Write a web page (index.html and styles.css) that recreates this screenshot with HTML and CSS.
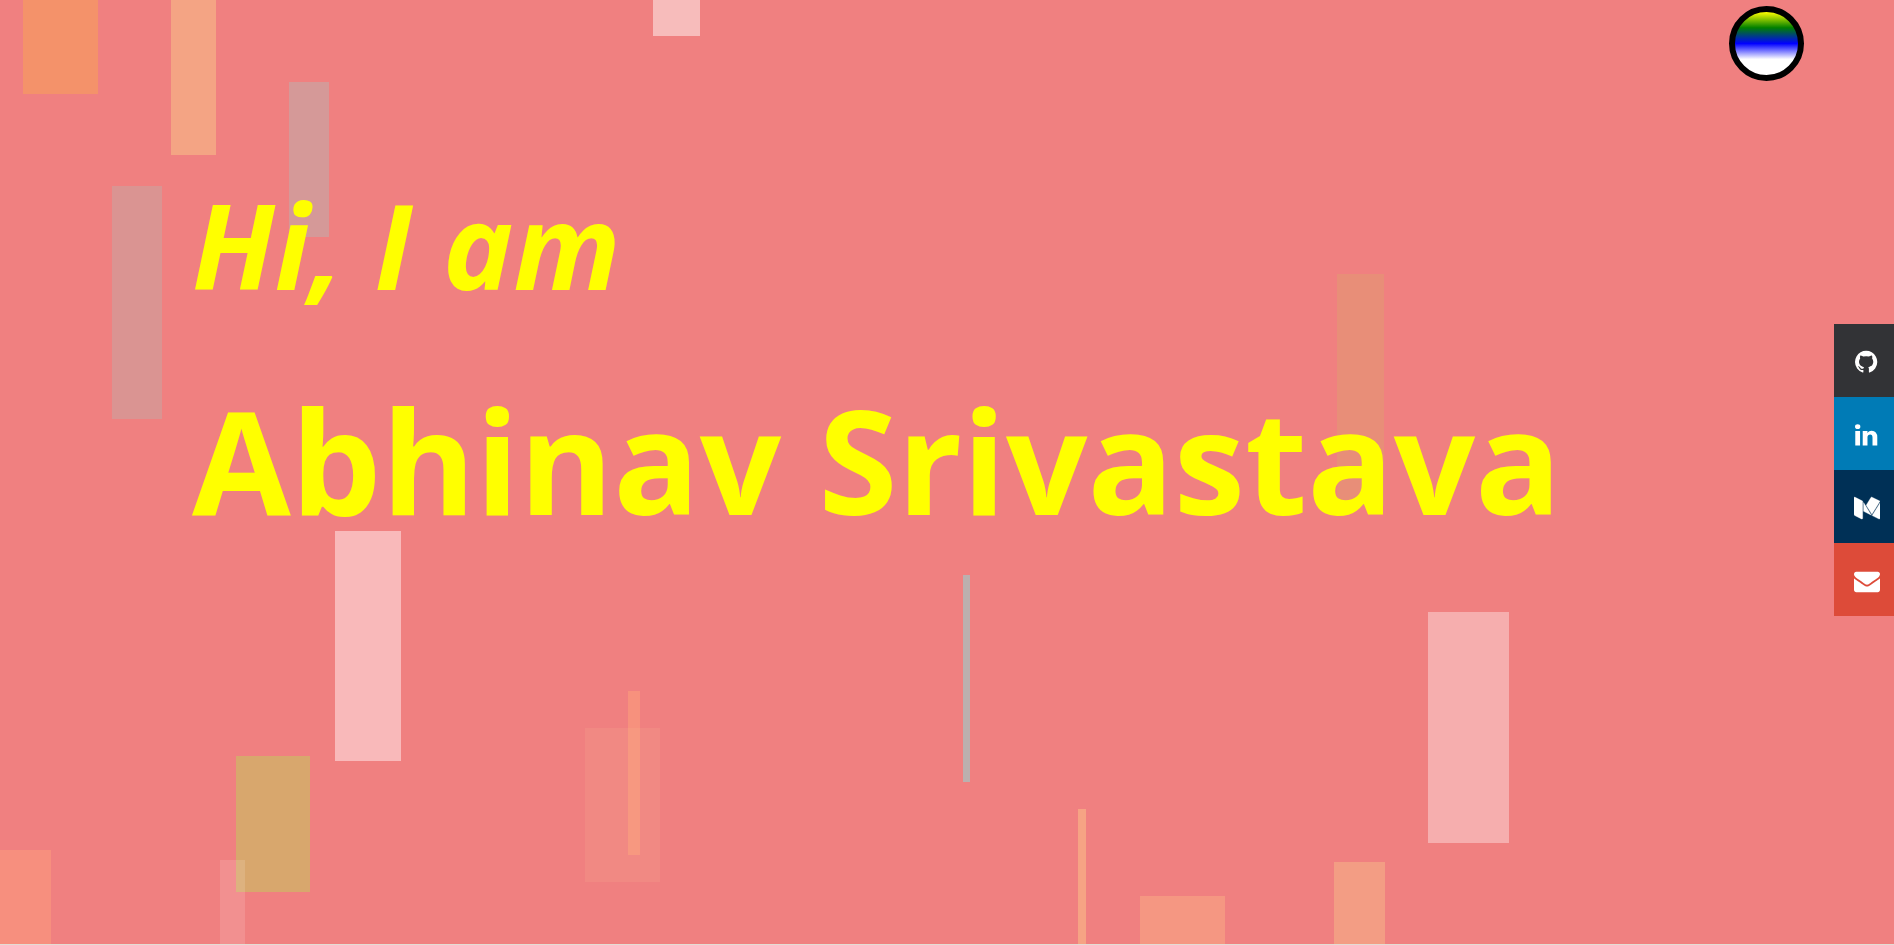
FILE: index.html
```html
<!DOCTYPE html>
<html lang="en">
<head>
<meta charset="utf-8">
<meta name="viewport" content="width=device-width, initial-scale=1">
<title>Abhinav Srivastava</title>
<link rel="stylesheet" href="styles.css">
</head>
<body>
<main class="hero">
  <svg class="backdrop" viewBox="0 0 1894 944" preserveAspectRatio="none" aria-hidden="true">
    <rect x="23" y="0" width="75" height="94" fill="#f4926a"/>
    <rect x="171" y="0" width="45" height="155" fill="#f4a484"/>
    <rect x="653" y="0" width="47" height="36" fill="#f7bcbb"/>
    <rect x="289" y="82" width="40" height="155" fill="#d59998"/>
    <rect x="112" y="186" width="50" height="233" fill="#da9492"/>
    <rect x="1337" y="274" width="47" height="232" fill="#e88e78"/>
    <rect x="335" y="531" width="66" height="230" fill="#f9b9ba"/>
    <rect x="236" y="756" width="74" height="136" fill="#d8a76d"/>
    <rect x="0" y="850" width="51" height="94" fill="#f78f7e"/>
    <rect x="220" y="860" width="25" height="84" fill="#ffffff" fill-opacity=".13"/>
    <rect x="628" y="691" width="12" height="164" fill="#f7917d"/>
    <rect x="585" y="728" width="75" height="154" fill="#ffd8a0" fill-opacity=".1"/>
    <rect x="963" y="575" width="7" height="207" fill="#bbb0af"/>
    <rect x="1078" y="809" width="8" height="135" fill="#f6a384"/>
    <rect x="1140" y="896" width="85" height="48" fill="#f59782"/>
    <rect x="1334" y="862" width="51" height="82" fill="#f39d84"/>
    <rect x="1428" y="612" width="81" height="231" fill="#f6aeae"/>
  </svg>
  <h2 class="greeting">Hi, I am</h2>
  <h1 class="name">Abhinav Srivastava</h1>
  <button class="theme" type="button" aria-label="Change theme"></button>
  <nav class="social" aria-label="Social links">
    <a class="social-link github" href="#" aria-label="GitHub">
      <svg class="icon" viewBox="0 0 1536 1792"><path fill="currentColor" d="M768 128q209 0 385.500 103t279.500 279.500 103 385.500q0 251-146.500 451.500t-378.500 277.500q-27 5-40-7t-13-30q0-3 .5-76.500t.5-134.500q0-97-52-142 57-6 102.500-18t94-39 81-66.500 53-105 20.500-150.500q0-119-79-206 37-91-8-204-28-9-81 11t-92 44l-38 24q-93-26-192-26t-192 26q-16-11-42.500-27t-83.500-38.500-85-13.500q-45 113-8 204-79 87-79 206 0 85 20.500 150t52.500 105 80.500 67 94 39 102.500 18q-39 36-49 103-21 10-45 15t-57 5-65.500-21.500-55.500-62.500q-19-32-48.500-52t-49.500-24l-20-3q-21 0-29 4.500t-5 11.500 9 14 13 12l7 5q22 10 43.500 38t31.500 51l10 23q13 38 44 61.500t67 30 69.500 7 55.500-3.500l23-4q0 38 .5 88.500t.5 54.500q0 18-13 30t-40 7q-232-77-378.500-277.500t-146.500-451.500q0-209 103-385.500t279.500-279.500 385.500-103z"/></svg>
    </a>
    <a class="social-link linkedin" href="#" aria-label="LinkedIn">
      <svg class="icon" viewBox="0 0 1536 1792"><path fill="currentColor" d="M349 625v991h-330v-991h330zM370 319q1 73-50.500 122t-135.500 49h-2q-82 0-132-49t-50-122q0-74 51.500-122.500t134.500-48.500 133 48.500 51 122.500zM1536 1048v568h-329v-530q0-105-40.500-164.500t-126.500-59.500q-63 0-105.500 34.500t-63.500 85.500q-11 30-11 81v553h-329q2-399 2-647t-1-296l-1-48h329v144h-2q20-32 41-56t56.500-52 87-43.500 114.500-15.500q171 0 275 113.500t104 332.500z"/></svg>
    </a>
    <a class="social-link medium" href="#" aria-label="Medium">
      <svg class="icon" viewBox="0 0 1792 1792"><path fill="currentColor" stroke="currentColor" stroke-width="24" d="M597 421v1173q0 25-12.500 42.500t-36.500 17.500q-17 0-33-8l-465-233q-21-10-35.500-33.500t-14.500-46.500v-1140q0-20 10-34t29-14q14 0 44 15l511 256q3 3 3 5zM661 522l534 866-534-266v-600zM1792 548v1046q0 25-14 41t-38 16-47-13l-441-220zM1789 428q0 3-256.500 419.500t-300.500 487.500l-390-634 324-527q17-28 52-28 14 0 26 6l541 270q4 2 4 6z"/></svg>
    </a>
    <a class="social-link mail" href="#" aria-label="Email">
      <svg class="icon" viewBox="0 0 1792 1792"><path fill="currentColor" d="M1792 710v794q0 66-47 113t-113 47h-1472q-66 0-113-47t-47-113v-794q44 49 101 87 362 246 497 345 57 42 92.500 65.500t94.500 48 110 24.500h2q51 0 110-24.500t94.500-48 92.500-65.500q170-123 498-345 57-39 100-87zM1792 416q0 79-49 151t-122 123q-376 261-468 325-10 7-42.500 30.500t-54 38-52 32.500-57.500 27-50 9h-2q-23 0-50-9t-57.500-27-52-32.500-54-38-42.500-30.500q-91-64-262-182.500t-205-142.500q-62-42-117-115.500t-55-136.500q0-78 41.500-130t118.500-52h1472q65 0 112.500 47t47.500 113z"/></svg>
    </a>
  </nav>
</main>
</body>
</html>
```
FILE: styles.css
```css
* {
  box-sizing: border-box;
}

body {
  margin: 0;
  background: #e4dcd4;
  font-family: "Segoe UI", "Open Sans", "Noto Sans", sans-serif;
}

.hero {
  position: relative;
  min-height: calc(100vh - 1px);
  padding: 168px 60px 0 192px;
  overflow: hidden;
  background: #f08080;
  color: #ffff00;
}

.backdrop {
  position: absolute;
  inset: 0;
  width: 100%;
  height: 100%;
}

.greeting,
.name {
  position: relative;
  margin: 0;
  font-weight: 700;
  white-space: nowrap;
}

.greeting {
  font-size: 6.25vw;
  font-style: italic;
  line-height: 152px;
}

.name {
  margin-top: 36px;
  font-size: 7.56vw;
  line-height: 208px;
}

.theme {
  position: absolute;
  top: 6px;
  right: 90px;
  width: 75px;
  height: 75px;
  padding: 0;
  border: 6px solid #000;
  border-radius: 50%;
  background: linear-gradient(yellow, green 25%, blue 50%, white 75%);
  cursor: pointer;
}

.social {
  position: absolute;
  top: 324px;
  right: 0;
  display: flex;
  flex-direction: column;
  width: 60px;
}

.social-link {
  display: flex;
  align-items: center;
  justify-content: center;
  height: 73px;
  padding: 2px 0 0 5px;
  color: #fff;
}

.icon {
  height: 26px;
}

.github {
  background: #323336;
}

.linkedin {
  background: #007bb6;
}

.medium {
  background: #003056;
}

.mail {
  background: #dd4b39;
}
```
